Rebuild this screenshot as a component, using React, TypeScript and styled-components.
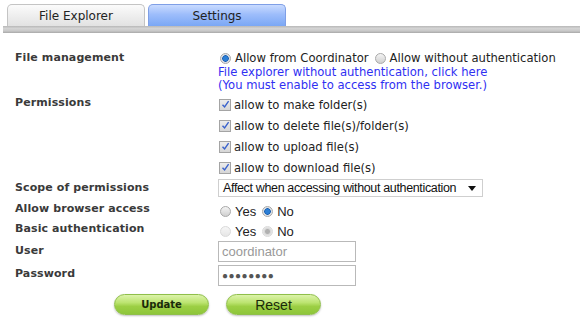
import React, { useState } from 'react'
import { createGlobalStyle, styled } from 'styled-components'

const GlobalStyle = createGlobalStyle`
  html, body {
    margin: 0;
    padding: 0;
    background: #ffffff;
  }
  body {
    font-family: "DejaVu Sans", Verdana, sans-serif;
    color: #333333;
  }
`

const Page = styled.div`
  width: 580px;
  height: 329px;
  overflow: hidden;
`

const TabBar = styled.div`
  display: flex;
  gap: 3px;
  padding: 4px 0 0 7px;
`

const Tab = styled.div<{ $active?: boolean }>`
  width: 136px;
  height: 21px;
  display: flex;
  align-items: center;
  justify-content: center;
  font-size: 12px;
  color: #222;
  border: 1px solid ${(p) => (p.$active ? '#7f9fe6' : '#c4c4c4')};
  border-bottom: none;
  border-radius: 5px 5px 0 0;
  background: ${(p) =>
    p.$active
      ? 'linear-gradient(#c9dbff 0%, #9dbdfb 45%, #7aa7f5 100%)'
      : 'linear-gradient(#fbfbfb 0%, #ececec 60%, #e2e2e2 100%)'};
`

const Rule = styled.div`
  margin-left: 3px;
  height: 7px;
  background: linear-gradient(#b8b8b8 0%, #d4d4d4 35%, #c8c8c8 70%, #a8a8a8 100%);
`

const Form = styled.div`
  padding: 17px 0 0 15px;
`

const Row = styled.div<{ $h: number }>`
  display: grid;
  grid-template-columns: 203px 1fr;
  height: ${(p) => p.$h}px;
`

const Label = styled.div<{ $top?: number }>`
  font-weight: bold;
  font-size: 11px;
  color: #3a3a3a;
  padding-top: ${(p) => p.$top ?? 0}px;
  letter-spacing: 0.1px;
`

const Value = styled.div`
  display: flex;
  flex-direction: column;
`

const Line = styled.div<{ $h?: number; $sans?: boolean }>`
  display: flex;
  align-items: center;
  height: ${(p) => p.$h ?? 16}px;
  font-family: ${(p) =>
    p.$sans ? '"Liberation Sans", Arial, sans-serif' : '"DejaVu Sans", Verdana, sans-serif'};
  font-size: ${(p) => (p.$sans ? '13px' : '11.6px')};
  color: #222;
  white-space: nowrap;
`

const LinkText = styled.div`
  font-size: 11.6px;
  line-height: 13px;
  color: #2f2ff2;
  cursor: pointer;
  white-space: nowrap;
`

const RadioDot = styled.span<{ $on?: boolean; $disabled?: boolean }>`
  width: 11px;
  height: 11px;
  border-radius: 50%;
  box-sizing: border-box;
  margin: 0 4px 0 2px;
  flex-shrink: 0;
  border: 1px solid ${(p) => (p.$disabled ? '#dadada' : '#a9a9a9')};
  background: ${(p) =>
    p.$on
      ? p.$disabled
        ? 'radial-gradient(circle, #b0b0b0 0 2px, #d8d8d8 3px, #efefef 5px)'
        : 'radial-gradient(circle, #2b7fd6 0 2px, #1a5fb0 3px, #d2d8e0 3.5px, #eef1f4 5px)'
      : p.$disabled
        ? 'linear-gradient(#f6f6f6, #e6e6e6)'
        : 'linear-gradient(#f4f4f4, #cfcfcf)'};
`

const Check = styled.span`
  width: 12px;
  height: 12px;
  box-sizing: border-box;
  border: 1px solid #a4a4a4;
  background: linear-gradient(#ececec, #d6d6d6);
  margin: 0 3px 0 1px;
  display: inline-flex;
  align-items: center;
  justify-content: center;
  flex-shrink: 0;
`

const Choice = styled.label`
  display: inline-flex;
  align-items: center;
  margin-right: 4px;
`

const Select = styled.div`
  width: 265px;
  height: 18px;
  box-sizing: border-box;
  border: 1px solid #cfcfcf;
  display: flex;
  align-items: center;
  justify-content: space-between;
  padding: 0 6px 0 4px;
  margin: 1px 0 0 0;
  font-family: "Liberation Sans", Arial, sans-serif;
  font-size: 12.5px;
  letter-spacing: -0.35px;
  color: #111;
`

const Input = styled.div<{ $dots?: boolean }>`
  width: 138px;
  height: 21px;
  box-sizing: border-box;
  border: 1px solid #b9b9b9;
  margin: 1px 0 0 0;
  padding: 0 3px;
  display: flex;
  align-items: center;
  font-family: "Liberation Sans", Arial, sans-serif;
  font-size: ${(p) => (p.$dots ? '10px' : '13px')};
  letter-spacing: ${(p) => (p.$dots ? '0.5px' : '0')};
  color: ${(p) => (p.$dots ? '#555' : '#999')};
`

const Buttons = styled.div`
  display: flex;
  gap: 17px;
  padding: 6px 0 0 114px;
`

const GreenButton = styled.button<{ $big?: boolean }>`
  width: 95px;
  height: 21px;
  border-radius: 11px;
  border: 1px solid #8fbf4a;
  background: linear-gradient(#dcf3aa 0%, #bce471 40%, #9ccf44 60%, #8ec63a 100%);
  box-shadow: 0 1px 2px rgba(0, 0, 0, 0.25);
  font-family: ${(p) =>
    p.$big ? '"Liberation Sans", Arial, sans-serif' : '"DejaVu Sans", Verdana, sans-serif'};
  font-size: ${(p) => (p.$big ? '14px' : '10px')};
  font-weight: ${(p) => (p.$big ? 'normal' : 'bold')};
  color: #1a2a0a;
  padding: 0;
  cursor: pointer;
`

function Radio({ on, disabled, label }: { on?: boolean; disabled?: boolean; label: string }) {
  return (
    <Choice>
      <RadioDot $on={on} $disabled={disabled} />
      {label}
    </Choice>
  )
}

function CheckItem({ label }: { label: string }) {
  return (
    <Line $h={21}>
      <Check>
        <svg width="9" height="9" viewBox="0 0 9 9">
          <path d="M1.5 4.8 L3.6 7 L7.6 1.2" fill="none" stroke="#3a62cc" strokeWidth="1.4" />
        </svg>
      </Check>
      {label}
    </Line>
  )
}

export default function App() {
  const [tab] = useState('settings')

  return (
    <Page>
      <GlobalStyle />
      <TabBar>
        <Tab $active={tab === 'explorer'}>File Explorer</Tab>
        <Tab $active={tab === 'settings'}>Settings</Tab>
      </TabBar>
      <Rule />
      <Form>
        <Row $h={44}>
          <Label $top={1}>File management</Label>
          <Value>
            <Line>
              <Radio on label="Allow from Coordinator" />
              <Radio label="Allow without authentication" />
            </Line>
            <LinkText>File explorer without authentication, click here</LinkText>
            <LinkText>(You must enable to access from the browser.)</LinkText>
          </Value>
        </Row>
        <Row $h={84}>
          <Label $top={2}>Permissions</Label>
          <Value>
            <CheckItem label="allow to make folder(s)" />
            <CheckItem label="allow to delete file(s)/folder(s)" />
            <CheckItem label="allow to upload file(s)" />
            <CheckItem label="allow to download file(s)" />
          </Value>
        </Row>
        <Row $h={21}>
          <Label $top={3}>Scope of permissions</Label>
          <Value>
            <Select>
              Affect when accessing without authentication
              <svg width="8" height="5" viewBox="0 0 8 5">
                <path d="M0 0 H8 L4 5 Z" fill="#111" />
              </svg>
            </Select>
          </Value>
        </Row>
        <Row $h={20}>
          <Label $top={3}>Allow browser access</Label>
          <Line $h={24} $sans>
            <Radio label="Yes" />
            <Radio on label="No" />
          </Line>
        </Row>
        <Row $h={21}>
          <Label $top={3}>Basic authentication</Label>
          <Line $h={24} $sans>
            <Radio disabled label="Yes" />
            <Radio disabled on label="No" />
          </Line>
        </Row>
        <Row $h={24}>
          <Label $top={4}>User</Label>
          <Value>
            <Input>coordinator</Input>
          </Value>
        </Row>
        <Row $h={24}>
          <Label $top={3}>Password</Label>
          <Value>
            <Input $dots>●●●●●●●●</Input>
          </Value>
        </Row>
      </Form>
      <Buttons>
        <GreenButton>Update</GreenButton>
        <GreenButton $big>Reset</GreenButton>
      </Buttons>
    </Page>
  )
}
